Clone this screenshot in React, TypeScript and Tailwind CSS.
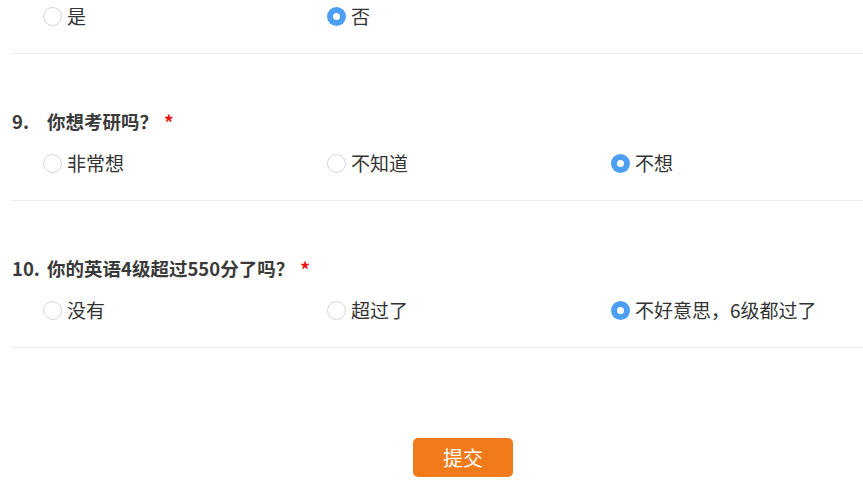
import React from "react";

const font = { fontFamily: '"Noto Sans CJK SC", "Noto Sans", sans-serif' };

function Radio({ label, checked }: { label: string; checked?: boolean }) {
  return (
    <div className="flex w-[284px] items-center gap-[5px]">
      {checked ? (
        <span className="flex h-[19px] w-[19px] items-center justify-center rounded-full bg-[#4c9ff3]">
          <span className="h-[7px] w-[7px] rounded-full bg-white" />
        </span>
      ) : (
        <span className="h-[19px] w-[19px] rounded-full border-[1.5px] border-[#d6d6d6] bg-white" />
      )}
      <span className="text-[19px] leading-[24px] text-[#333]">{label}</span>
    </div>
  );
}

function Options({ items, checkedIndex }: { items: string[]; checkedIndex: number }) {
  return (
    <div className="flex h-9 items-center pl-[31px]">
      {items.map((it, i) => (
        <Radio key={it} label={it} checked={i === checkedIndex} />
      ))}
    </div>
  );
}

function Question({
  num,
  title,
  items,
  checkedIndex,
}: {
  num: string;
  title: string;
  items: string[];
  checkedIndex: number;
}) {
  return (
    <div className="border-b border-[#ececec] pt-[56px] pb-[19px]">
      <div className="flex h-6 items-center text-[18.5px] font-bold text-[#3a3a3a]">
        <span className="inline-block w-[35px]">{num}</span>
        <span>{title}</span>
        <span className="ml-[6px] text-[19px] text-[#ee1111]">*</span>
      </div>
      <div className="mt-[11px]">
        <Options items={items} checkedIndex={checkedIndex} />
      </div>
    </div>
  );
}

export default function App() {
  return (
    <div className="w-full overflow-hidden bg-white" style={font}>
      <div className="w-[926px] pl-[12px]">
        <div className="-mt-[2px] border-b border-[#ececec] pb-[19px]">
          <Options items={["是", "否"]} checkedIndex={1} />
        </div>
        <Question num="9." title="你想考研吗？" items={["非常想", "不知道", "不想"]} checkedIndex={2} />
        <Question
          num="10."
          title="你的英语4级超过550分了吗？"
          items={["没有", "超过了", "不好意思，6级都过了"]}
          checkedIndex={2}
        />
      </div>
      <div className="w-[926px] flex justify-center pt-[90px] pb-[10px]">
        <button className="h-[39px] w-[100px] rounded-[5px] bg-[#f17a1b] text-[20px] text-white">
          提交
        </button>
      </div>
    </div>
  );
}
